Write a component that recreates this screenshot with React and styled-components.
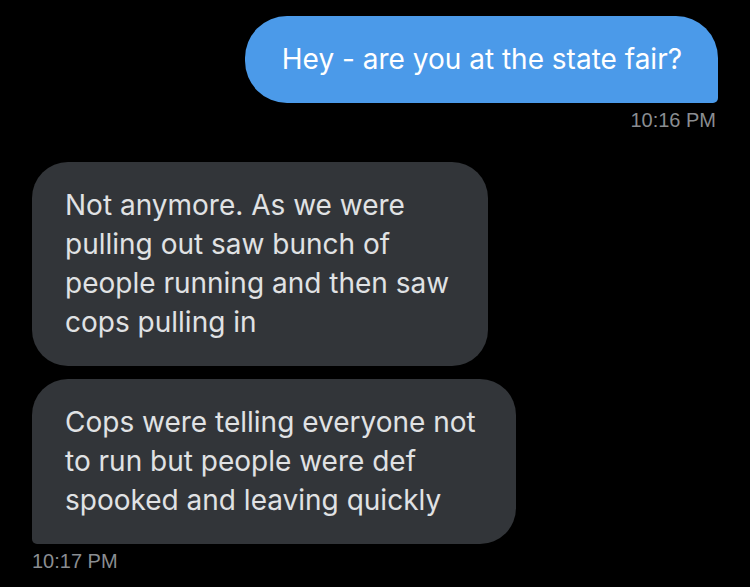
import styled, { createGlobalStyle } from "styled-components";

const Global = createGlobalStyle`
  html, body {
    margin: 0;
    padding: 0;
    background: #000;
  }
  body {
    width: 750px;
    height: 587px;
    overflow: hidden;
  }
`;

const Thread = styled.div`
  display: flex;
  flex-direction: column;
  padding: 16px 32px 0 32px;
  font-family: Inter, "Liberation Sans", sans-serif;
`;

const Group = styled.div`
  display: flex;
  flex-direction: column;
  align-items: ${(p) => (p.$mine ? "flex-end" : "flex-start")};
  gap: 13px;
  margin-bottom: ${(p) => p.$gapAfter || 0}px;
`;

const Bubble = styled.div`
  box-sizing: border-box;
  width: ${(p) => (p.$width ? `${p.$width}px` : "auto")};
  padding: ${(p) => (p.$mine ? "24px 36px 24px 37px" : "24px 33px")};
  font-size: 28px;
  line-height: 39px;
  color: ${(p) => (p.$mine ? "#ffffff" : "#e0e2e4")};
  background: ${(p) => (p.$mine ? "#4b9ae9" : "#323539")};
  border-radius: ${(p) =>
    p.$mine
      ? "42px 42px 5px 42px"
      : p.$tail
      ? "36px 36px 36px 5px"
      : "36px"};
`;

const Time = styled.div`
  font-family: "Liberation Sans", Arial, sans-serif;
  font-size: 20px;
  line-height: 24px;
  color: #8a8d91;
  margin-top: -8px;
  padding-right: ${(p) => (p.$mine ? 2 : 0)}px;
`;

export default function App() {
  return (
    <>
      <Global />
      <Thread>
        <Group $mine $gapAfter={30}>
          <Bubble $mine>Hey - are you at the state fair?</Bubble>
          <Time $mine>10:16 PM</Time>
        </Group>
        <Group>
          <Bubble $width={456}>
            Not anymore. As we were pulling out saw bunch of people running
            and then saw cops pulling in
          </Bubble>
          <Bubble $width={484} $tail>
            Cops were telling everyone not to run but people were def spooked
            and leaving quickly
          </Bubble>
          <Time>10:17 PM</Time>
        </Group>
      </Thread>
    </>
  );
}
